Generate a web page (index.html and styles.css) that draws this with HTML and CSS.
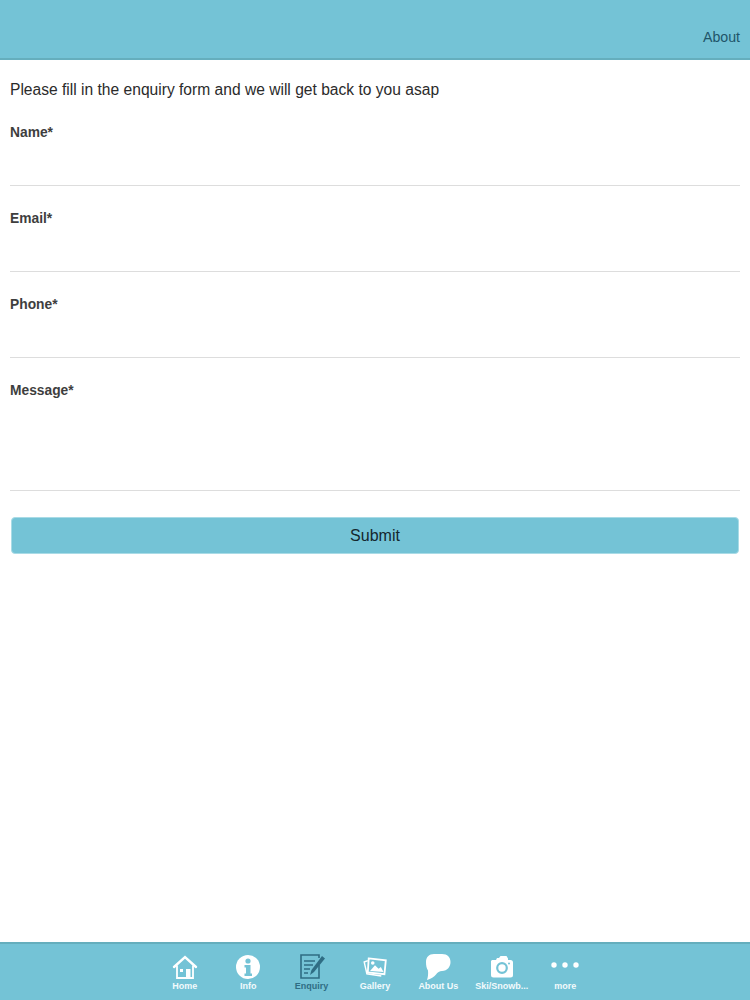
FILE: index.html
```
<!DOCTYPE html>
<html lang="en">
<head>
<meta charset="utf-8">
<title>Enquiry</title>
<link rel="stylesheet" href="styles.css">
</head>
<body>
<div class="page">
<header class="topbar"><span class="top-link">About</span></header>
<main class="content">
<p class="intro">Please fill in the enquiry form and we will get back to you asap</p>
<form class="form">
<div class="field"><label class="label">Name*</label><div class="line"></div></div>
<div class="field"><label class="label">Email*</label><div class="line"></div></div>
<div class="field"><label class="label">Phone*</label><div class="line"></div></div>
<div class="field field-tall"><label class="label">Message*</label><div class="line"></div></div>
<button class="submit" type="button">Submit</button>
</form>
</main>
<nav class="tabbar">
<div class="tab"><svg class="icon" viewBox="0 0 26 26"><path d="M2 13 13 3l11 10" fill="none" stroke="#fff" stroke-width="2.400" stroke-linecap="round"/><path d="M5 11.500V24h16V11.500" fill="none" stroke="#fff" stroke-width="1.800"/><path d="M14 15h4.500v9H14z" fill="#fff"/><path d="M8 15h3v3H8z" fill="#fff"/></svg><span>Home</span></div>
<div class="tab"><svg class="icon" viewBox="0 0 26 26"><circle cx="13" cy="13" r="12" fill="#fff"/><circle cx="13" cy="7" r="2.600" fill="#74c3d6"/><path d="M9.500 11h6v8.500h1.500V22H9.500v-2.500H11v-6H9.500z" fill="#74c3d6"/></svg><span>Info</span></div>
<div class="tab tab-active"><svg class="icon" viewBox="0 0 26 26"><path d="M20 11v13H2V1h18v3" fill="none" stroke="#2f6d84" stroke-width="1.600"/><path d="M5 7h11M5 11h9M5 15h6M5 19h4" stroke="#2f6d84" stroke-width="1.300"/><path d="M11 21l1.500-5L23 2l3 2.500-11 13.500z" fill="#2f6d84"/></svg><span>Enquiry</span></div>
<div class="tab"><svg class="icon icon-gallery" viewBox="0 0 26 26"><path d="M5 6 1 7.500l3 13 16 2.500" fill="none" stroke="#fff" stroke-width="1.600"/><path d="M6 3.500l19 2-1.500 15.500L5 19z" fill="none" stroke="#fff" stroke-width="2"/><path d="M7.500 17.500 13 11l4 4 2.500-2 3 5.500z" fill="#fff"/><circle cx="10.500" cy="8.500" r="2" fill="#fff"/></svg><span>Gallery</span></div>
<div class="tab"><svg class="icon" viewBox="0 0 26 26"><path d="M9 0h8c5.500 0 8.500 3.500 8.500 8s-3 9-8.500 9c-2.500 0-4.500 1.500-6 3.500C9 23 6 25 2 26c1-3 1.300-6 1-9.500C1.500 14.500 1 11.500 1 8c0-5 3-8 8-8z" fill="#fff"/></svg><span>About Us</span></div>
<div class="tab"><svg class="icon" viewBox="0 0 26 26"><path d="M3 6h4l1-2h2l1.500-2h6L19 4.500V6h2.500A2.500 2.500 0 0 1 24 8.500V21a2.500 2.500 0 0 1-2.500 2.500h-17A2.500 2.500 0 0 1 2 21V7z" fill="#fff"/><circle cx="13" cy="14" r="4.800" fill="none" stroke="#74c3d6" stroke-width="2.200"/><circle cx="20" cy="9.500" r="1" fill="#74c3d6"/></svg><span>Ski/Snowb...</span></div>
<div class="tab"><svg class="icon" viewBox="0 0 26 26"><circle cx="2" cy="11" r="2.700" fill="#fff"/><circle cx="13" cy="11" r="2.700" fill="#fff"/><circle cx="24" cy="11" r="2.700" fill="#fff"/></svg><span>more</span></div>
</nav>
</div>
</body>
</html>
```
FILE: styles.css
```
* { box-sizing: border-box; }
html, body { margin: 0; padding: 0; }
body { font-family: "Liberation Sans", Arial, sans-serif; background: #fff; color: #222; }
.page { width: 750px; height: 1000px; display: flex; flex-direction: column; overflow: hidden; }
.topbar { height: 60px; background: #74c3d6; border-bottom: 2px solid #65aebd; display: flex; align-items: flex-end; justify-content: flex-end; padding: 0 10px 12px 0; }
.top-link { font-size: 14.200px; line-height: 18px; color: #1f5569; }
.content { flex: 1; padding: 0 10px; }
.intro { margin: 0; padding-top: 20px; font-size: 15.600px; line-height: 20px; color: #2b2b2b; }
.form { display: flex; flex-direction: column; gap: 23px; padding-top: 23px; }
.field { height: 63px; padding-top: 1px; display: flex; flex-direction: column; justify-content: space-between; }
.field-tall { height: 110px; }
.label { font-size: 13.800px; line-height: 18px; font-weight: bold; color: #3e3e3e; }
.line { height: 1px; background: #dddddd; }
.submit { margin: 3px 1px 0; height: 37px; padding: 1px 0 0; background: #74c3d6; border: 1px solid #a9dbe6; border-radius: 4px; font-family: inherit; font-size: 16px; color: #14272e; }
.tabbar { height: 58px; background: #74c3d6; border-top: 2px solid #65aebd; display: flex; justify-content: center; padding-top: 10px; }
.tab { width: 63.400px; display: flex; flex-direction: column; align-items: center; font-size: 9px; line-height: 10px; font-weight: bold; color: #f2fafc; white-space: nowrap; }
.tab-active { color: #2f6d84; }
.icon { width: 26px; height: 26px; margin-bottom: 1px; overflow: visible; }
.icon-gallery { transform: scale(0.9); }
```
